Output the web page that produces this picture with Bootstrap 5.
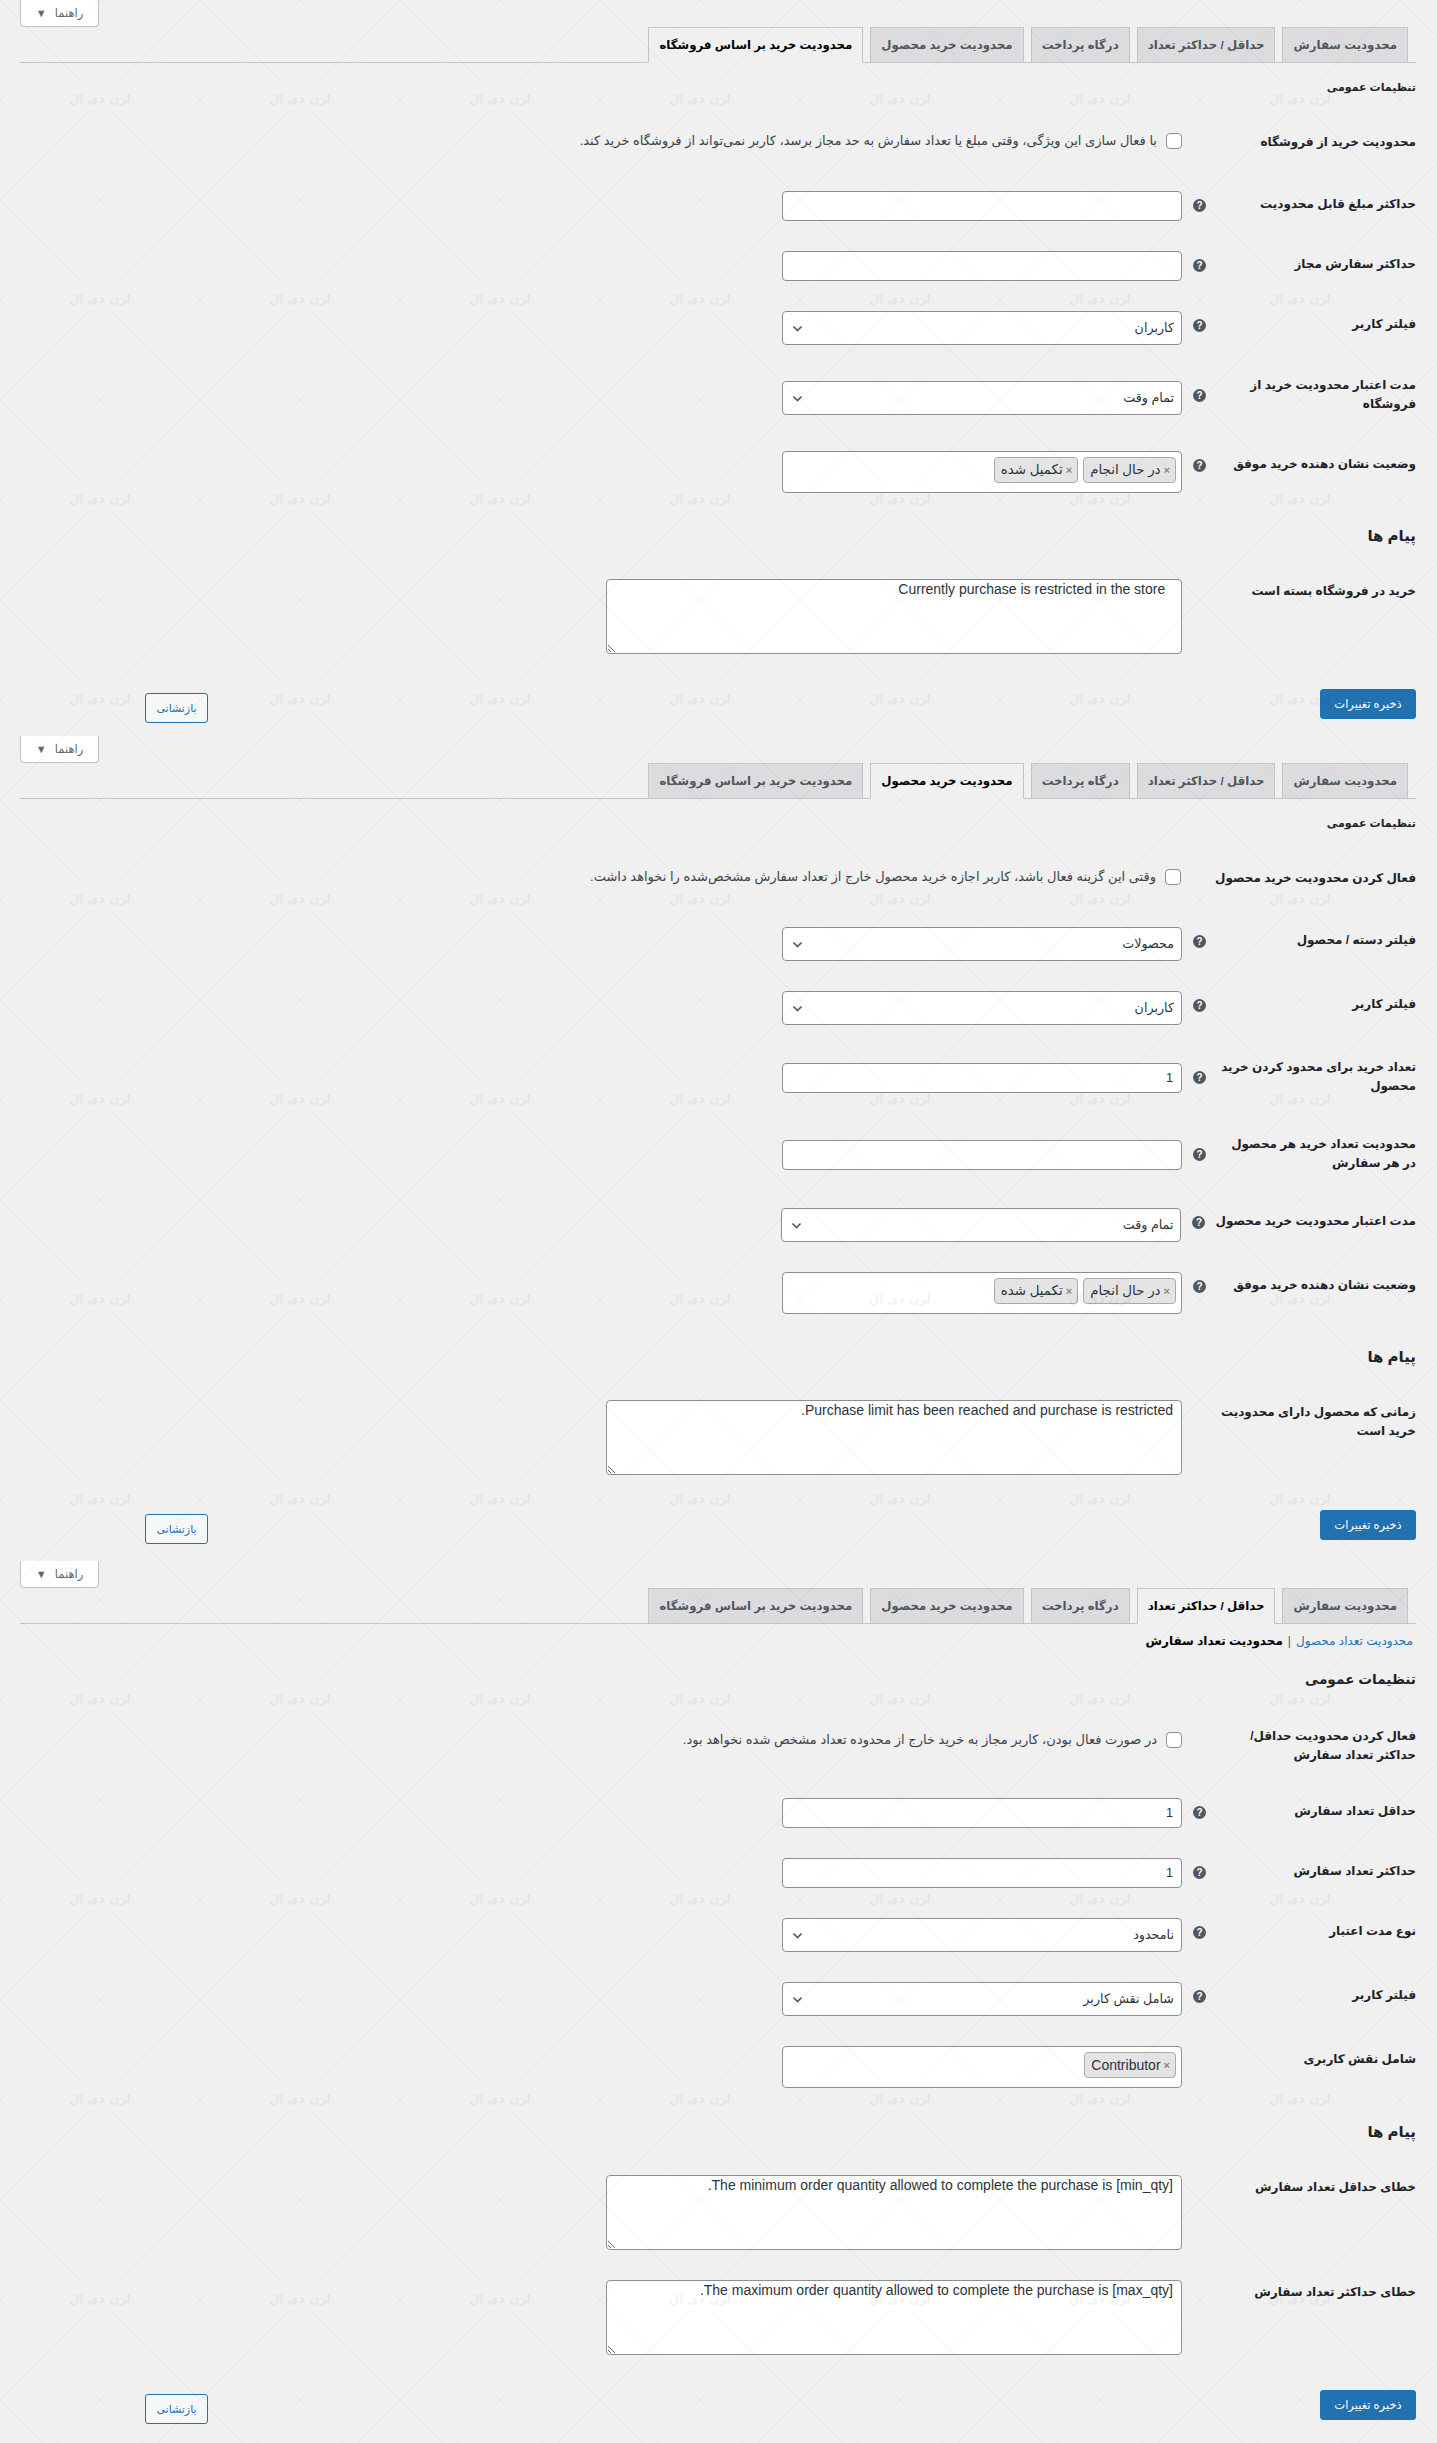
<!DOCTYPE html>
<html lang="fa" dir="rtl">
<head>
  <meta charset="UTF-8" />
  <meta name="viewport" content="width=device-width, initial-scale=1.0" />
  <title>تنظیمات محدودیت خرید</title>
  <link rel="stylesheet" href="https://cdn.jsdelivr.net/npm/bootstrap@5.3.0/dist/css/bootstrap.min.css">
  <style>
    :root { --wp-blue: #2271b1; --field-line: #8c8f94; }
    html, body { margin: 0; }
    body {
      position: relative;
      min-height: 2443px;
      padding: 0 21px 0 20px;
      overflow-x: hidden;
      background-color: #f0f0f1;
      color: #1d2327;
      font-family: "Liberation Sans", "DejaVu Sans", sans-serif;
      font-size: 12px;
      line-height: 20px;
    }
    /* watermark of the site, it lies over everything, inputs too */
    body::after {
      content: "";
      position: absolute;
      inset: 0;
      pointer-events: none;
      background-image: url("data:image/svg+xml;utf8,<svg xmlns='http://www.w3.org/2000/svg' width='200' height='200'><g stroke='%23000' stroke-opacity='.035' fill='none'><path d='M0 0L83 83M112 112L200 200M0 200L90 110M118 83L200 0M0 100L100 200L200 100L100 0Z'/></g><text x='100' y='103' direction='rtl' text-anchor='middle' font-family='DejaVu Sans' font-weight='bold' font-size='12' fill='%23000' fill-opacity='.05'>لرن دی ال</text></svg>");
      background-size: 200px 200px;
    }
    .guide-tab-holder { height: 27px; }
    .guide-tab {
      width: 79px;
      height: 27px;
      background: #fff;
      border: 1px solid #c3c4c7;
      border-top: 0;
      border-radius: 0 0 4px 4px;
      color: #646970;
      font-size: 11.5px;
    }
    .guide-tab i { font-style: normal; font-size: 11px; margin-right: 5px; }

    .nav-tabs { border-bottom: 1px solid #c3c4c7; padding-right: 8px; height: 36px; }
    .nav-tabs .nav-link {
      height: 36px;
      margin-left: 7px;
      padding: 5px 10px;
      background: #dcdcde;
      border: 1px solid #c3c4c7;
      border-radius: 0;
      color: #50575e;
      font-size: 11.78px;
      font-weight: 600;
      line-height: 24px;
      white-space: nowrap;
    }
    .nav-tabs .nav-link.active {
      background: #f0f0f1;
      border-color: #c3c4c7 #c3c4c7 #f0f0f1;
      color: #000;
    }

    .block-title { margin: 0; font-weight: 700; color: #1d2327; }
    .title-small { font-size: 11px; line-height: 20px; margin-top: 14px; margin-bottom: 36px; }
    .title-big { font-size: 15px; line-height: 24px; margin-bottom: 31px; }
    .title-wide { font-size: 13.7px; margin-top: 17px; margin-bottom: 40px; }

    .sub-links { margin-top: 7px; padding-right: 3px; height: 20px; font-size: 12px; color: #50575e; }
    .sub-links a { color: var(--wp-blue); text-decoration: none; }
    .sub-links b { color: #000; }
    .sub-links .sep { margin: 0 5px; }

    .opt-row { display: flex; align-items: flex-start; }
    .rh-58 { height: 58px; } .rh-60 { height: 60px; } .rh-64 { height: 64px; }
    .rh-66 { height: 66px; } .rh-68 { height: 68px; } .rh-70 { height: 70px; }
    .rh-72 { height: 72px; } .rh-73 { height: 73px; } .rh-74 { height: 74px; }
    .rh-77 { height: 77px; } .rh-105 { height: 105px; } .rh-110 { height: 110px; }

    .opt-label {
      flex: 0 0 200px;
      margin: 3px 0 0 10px;
      font-size: 12px;
      font-weight: 700;
      color: #1d2327;
      white-space: nowrap;
    }
    .opt-label.two-lines { margin-top: -5px; line-height: 19px; }
    .opt-label.check-label { margin-top: -1px; }
    .opt-label.note-label { margin-top: 2px; }
    .opt-label.two-lines.note-label { margin-top: 3px; line-height: 19px; }
    .help-slot { flex: 0 0 13px; margin-left: 11px; }
    .help-dot {
      display: block;
      width: 13px;
      height: 13px;
      margin-top: 8px;
      border-radius: 50%;
      background: #50575e;
      color: #fff;
      font: 700 10px/13px "Liberation Sans", sans-serif;
      text-align: center;
    }

    .field-box {
      width: 400px;
      height: 30px;
      padding: 0 8px;
      background-color: #fff;
      border: 1px solid var(--field-line);
      border-radius: 4px;
      color: #2c3338;
      font-size: 12.7px;
      line-height: 28px;
      box-shadow: none;
    }
    .field-box.form-select {
      height: 34px;
      padding: 0 7px 0 24px;
      background-image: url("data:image/svg+xml;utf8,<svg xmlns='http://www.w3.org/2000/svg' viewBox='0 0 16 16'><path fill='none' stroke='%2350575e' stroke-width='2' d='M3 5.5l5 5 5-5'/></svg>");
      background-position: left 8px center;
      background-size: 13px 13px;
    }
    .tag-box {
      display: flex;
      gap: 5px;
      width: 400px;
      height: 42px;
      padding: 5px;
      background: #fff;
      border: 1px solid var(--field-line);
      border-radius: 4px;
    }
    .tag-pill {
      display: inline-flex;
      align-items: center;
      height: 26px;
      padding: 0 5px 0 6px;
      background: #e4e4e5;
      border: 1px solid #aaa;
      border-radius: 4px;
      color: #2c3338;
      font-size: 13.4px;
    }
    .tag-pill.latin-tag { font-size: 14px; }
    .tag-pill i { font-style: normal; font-weight: 700; color: #888; font-size: 11px; margin-left: 3px; }
    .note-box {
      width: 576px;
      height: 75px;
      padding: 0 8px;
      background: #fff;
      border: 1px solid var(--field-line);
      border-radius: 4px;
      color: #2c3338;
      font-family: "Liberation Sans", sans-serif;
      font-size: 14px;
      line-height: 18px;
      box-shadow: none;
    }
    .note-box.form-control { min-height: 0; }

    .check-cell { display: flex; align-items: center; gap: 9px; height: 16px; color: #3c434a; font-size: 13px; white-space: nowrap; }
    .check-cell .form-check-input {
      flex: none;
      width: 16px;
      height: 16px;
      margin: 0;
      background-color: #fff;
      border: 1px solid var(--field-line);
      border-radius: 4px;
    }

    .save-row { display: flex; justify-content: space-between; align-items: flex-start; }
    .save-row.end-short { height: 47px; }
    .save-row.end-tall { height: 51px; }
    .btn-save, .btn-back { height: 30px; padding: 0; line-height: 28px; border-radius: 3px; }
    .btn-save { width: 96px; background: var(--wp-blue); border: 1px solid var(--wp-blue); color: #fff; font-size: 11.5px; }
    .btn-back {
      width: 63px;
      margin: 4px 0 0 125px;
      background: #f6f7f7;
      border: 1px solid var(--wp-blue);
      color: var(--wp-blue);
      font-size: 11px;
    }
  </style>
</head>
<body>

  <!-- فروشگاه -->
  <section>
    <div class="guide-tab-holder d-flex justify-content-end">
      <button type="button" class="guide-tab">راهنما <i>▼</i></button>
    </div>
    <ul class="nav nav-tabs">
      <li class="nav-item"><a class="nav-link" href="#">محدودیت سفارش</a></li>
      <li class="nav-item"><a class="nav-link" href="#">حداقل / حداکثر تعداد</a></li>
      <li class="nav-item"><a class="nav-link" href="#">درگاه پرداخت</a></li>
      <li class="nav-item"><a class="nav-link" href="#">محدودیت خرید محصول</a></li>
      <li class="nav-item"><a class="nav-link active" href="#">محدودیت خرید بر اساس فروشگاه</a></li>
    </ul>
    <h2 class="block-title title-small">تنظیمات عمومی</h2>

    <div class="opt-row rh-58">
      <label class="opt-label check-label">محدودیت خرید از فروشگاه</label>
      <div class="help-slot"></div>
      <div class="check-cell"><input class="form-check-input" type="checkbox"> با فعال سازی این ویژگی، وقتی مبلغ یا تعداد سفارش به حد مجاز برسد، کاربر نمی‌تواند از فروشگاه خرید کند.</div>
    </div>
    <div class="opt-row rh-60">
      <label class="opt-label">حداکثر مبلغ قابل محدودیت</label>
      <div class="help-slot"><span class="help-dot">?</span></div>
      <input class="form-control field-box" type="text">
    </div>
    <div class="opt-row rh-60">
      <label class="opt-label">حداکثر سفارش مجاز</label>
      <div class="help-slot"><span class="help-dot">?</span></div>
      <input class="form-control field-box" type="text">
    </div>
    <div class="opt-row rh-70">
      <label class="opt-label">فیلتر کاربر</label>
      <div class="help-slot"><span class="help-dot">?</span></div>
      <select class="form-select field-box"><option>کاربران</option></select>
    </div>
    <div class="opt-row rh-70">
      <label class="opt-label two-lines">مدت اعتبار محدودیت خرید از<br>فروشگاه</label>
      <div class="help-slot"><span class="help-dot">?</span></div>
      <select class="form-select field-box"><option>تمام وقت</option></select>
    </div>
    <div class="opt-row rh-73">
      <label class="opt-label">وضعیت نشان دهنده خرید موفق</label>
      <div class="help-slot"><span class="help-dot">?</span></div>
      <div class="tag-box">
        <span class="tag-pill"><i>×</i>در حال انجام</span>
        <span class="tag-pill"><i>×</i>تکمیل شده</span>
      </div>
    </div>

    <h2 class="block-title title-big">پیام ها</h2>
    <div class="opt-row rh-110">
      <label class="opt-label note-label">خرید در فروشگاه بسته است</label>
      <div class="help-slot"></div>
      <textarea class="form-control note-box">  Currently purchase is restricted in the store</textarea>
    </div>
    <div class="save-row end-short">
      <button type="button" class="btn btn-save">ذخیره تغییرات</button>
      <button type="button" class="btn btn-back">بازنشانی</button>
    </div>
  </section>

  <!-- محصول -->
  <section>
    <div class="guide-tab-holder d-flex justify-content-end">
      <button type="button" class="guide-tab">راهنما <i>▼</i></button>
    </div>
    <ul class="nav nav-tabs">
      <li class="nav-item"><a class="nav-link" href="#">محدودیت سفارش</a></li>
      <li class="nav-item"><a class="nav-link" href="#">حداقل / حداکثر تعداد</a></li>
      <li class="nav-item"><a class="nav-link" href="#">درگاه پرداخت</a></li>
      <li class="nav-item"><a class="nav-link active" href="#">محدودیت خرید محصول</a></li>
      <li class="nav-item"><a class="nav-link" href="#">محدودیت خرید بر اساس فروشگاه</a></li>
    </ul>
    <h2 class="block-title title-small">تنظیمات عمومی</h2>

    <div class="opt-row rh-58">
      <label class="opt-label check-label">فعال کردن محدودیت خرید محصول</label>
      <div class="help-slot"></div>
      <div class="check-cell"><input class="form-check-input" type="checkbox"> وقتی این گزینه فعال باشد، کاربر اجازه خرید محصول خارج از تعداد سفارش مشخص‌شده را نخواهد داشت.</div>
    </div>
    <div class="opt-row rh-64">
      <label class="opt-label">فیلتر دسته / محصول</label>
      <div class="help-slot"><span class="help-dot">?</span></div>
      <select class="form-select field-box"><option>محصولات</option></select>
    </div>
    <div class="opt-row rh-72">
      <label class="opt-label">فیلتر کاربر</label>
      <div class="help-slot"><span class="help-dot">?</span></div>
      <select class="form-select field-box"><option>کاربران</option></select>
    </div>
    <div class="opt-row rh-77">
      <label class="opt-label two-lines">تعداد خرید برای محدود کردن خرید<br>محصول</label>
      <div class="help-slot"><span class="help-dot">?</span></div>
      <input class="form-control field-box" type="text" value="1">
    </div>
    <div class="opt-row rh-68">
      <label class="opt-label two-lines">محدودیت تعداد خرید هر محصول<br>در هر سفارش</label>
      <div class="help-slot"><span class="help-dot">?</span></div>
      <input class="form-control field-box" type="text">
    </div>
    <div class="opt-row rh-64">
      <label class="opt-label">مدت اعتبار محدودیت خرید محصول</label>
      <div class="help-slot"><span class="help-dot">?</span></div>
      <select class="form-select field-box"><option>تمام وقت</option></select>
    </div>
    <div class="opt-row rh-73">
      <label class="opt-label">وضعیت نشان دهنده خرید موفق</label>
      <div class="help-slot"><span class="help-dot">?</span></div>
      <div class="tag-box">
        <span class="tag-pill"><i>×</i>در حال انجام</span>
        <span class="tag-pill"><i>×</i>تکمیل شده</span>
      </div>
    </div>

    <h2 class="block-title title-big">پیام ها</h2>
    <div class="opt-row rh-110">
      <label class="opt-label two-lines note-label">زمانی که محصول دارای محدودیت<br>خرید است</label>
      <div class="help-slot"></div>
      <textarea class="form-control note-box">Purchase limit has been reached and purchase is restricted.</textarea>
    </div>
    <div class="save-row end-tall">
      <button type="button" class="btn btn-save">ذخیره تغییرات</button>
      <button type="button" class="btn btn-back">بازنشانی</button>
    </div>
  </section>

  <!-- حداقل / حداکثر -->
  <section>
    <div class="guide-tab-holder d-flex justify-content-end">
      <button type="button" class="guide-tab">راهنما <i>▼</i></button>
    </div>
    <ul class="nav nav-tabs">
      <li class="nav-item"><a class="nav-link" href="#">محدودیت سفارش</a></li>
      <li class="nav-item"><a class="nav-link active" href="#">حداقل / حداکثر تعداد</a></li>
      <li class="nav-item"><a class="nav-link" href="#">درگاه پرداخت</a></li>
      <li class="nav-item"><a class="nav-link" href="#">محدودیت خرید محصول</a></li>
      <li class="nav-item"><a class="nav-link" href="#">محدودیت خرید بر اساس فروشگاه</a></li>
    </ul>
    <div class="sub-links"><a href="#">محدودیت تعداد محصول</a><span class="sep">|</span><b>محدودیت تعداد سفارش</b></div>
    <h2 class="block-title title-big title-wide">تنظیمات عمومی</h2>

    <div class="opt-row rh-66">
      <label class="opt-label two-lines">فعال کردن محدودیت حداقل/<br>حداکثر تعداد سفارش</label>
      <div class="help-slot"></div>
      <div class="check-cell"><input class="form-check-input" type="checkbox"> در صورت فعال بودن، کاربر مجاز به خرید خارج از محدوده تعداد مشخص شده نخواهد بود.</div>
    </div>
    <div class="opt-row rh-60">
      <label class="opt-label">حداقل تعداد سفارش</label>
      <div class="help-slot"><span class="help-dot">?</span></div>
      <input class="form-control field-box" type="text" value="1">
    </div>
    <div class="opt-row rh-60">
      <label class="opt-label">حداکثر تعداد سفارش</label>
      <div class="help-slot"><span class="help-dot">?</span></div>
      <input class="form-control field-box" type="text" value="1">
    </div>
    <div class="opt-row rh-64">
      <label class="opt-label">نوع مدت اعتبار</label>
      <div class="help-slot"><span class="help-dot">?</span></div>
      <select class="form-select field-box"><option>نامحدود</option></select>
    </div>
    <div class="opt-row rh-64">
      <label class="opt-label">فیلتر کاربر</label>
      <div class="help-slot"><span class="help-dot">?</span></div>
      <select class="form-select field-box"><option>شامل نقش کاربر</option></select>
    </div>
    <div class="opt-row rh-74">
      <label class="opt-label">شامل نقش کاربری</label>
      <div class="help-slot"></div>
      <div class="tag-box">
        <span class="tag-pill latin-tag"><i>×</i>Contributor</span>
      </div>
    </div>

    <h2 class="block-title title-big">پیام ها</h2>
    <div class="opt-row rh-105">
      <label class="opt-label note-label">خطای حداقل تعداد سفارش</label>
      <div class="help-slot"></div>
      <textarea class="form-control note-box">The minimum order quantity allowed to complete the purchase is [min_qty].</textarea>
    </div>
    <div class="opt-row rh-110">
      <label class="opt-label note-label">خطای حداکثر تعداد سفارش</label>
      <div class="help-slot"></div>
      <textarea class="form-control note-box">The maximum order quantity allowed to complete the purchase is [max_qty].</textarea>
    </div>
    <div class="save-row end-short">
      <button type="button" class="btn btn-save">ذخیره تغییرات</button>
      <button type="button" class="btn btn-back">بازنشانی</button>
    </div>
  </section>

  <script src="https://cdn.jsdelivr.net/npm/bootstrap@5.3.0/dist/js/bootstrap.bundle.min.js"></script>
</body>
</html>
